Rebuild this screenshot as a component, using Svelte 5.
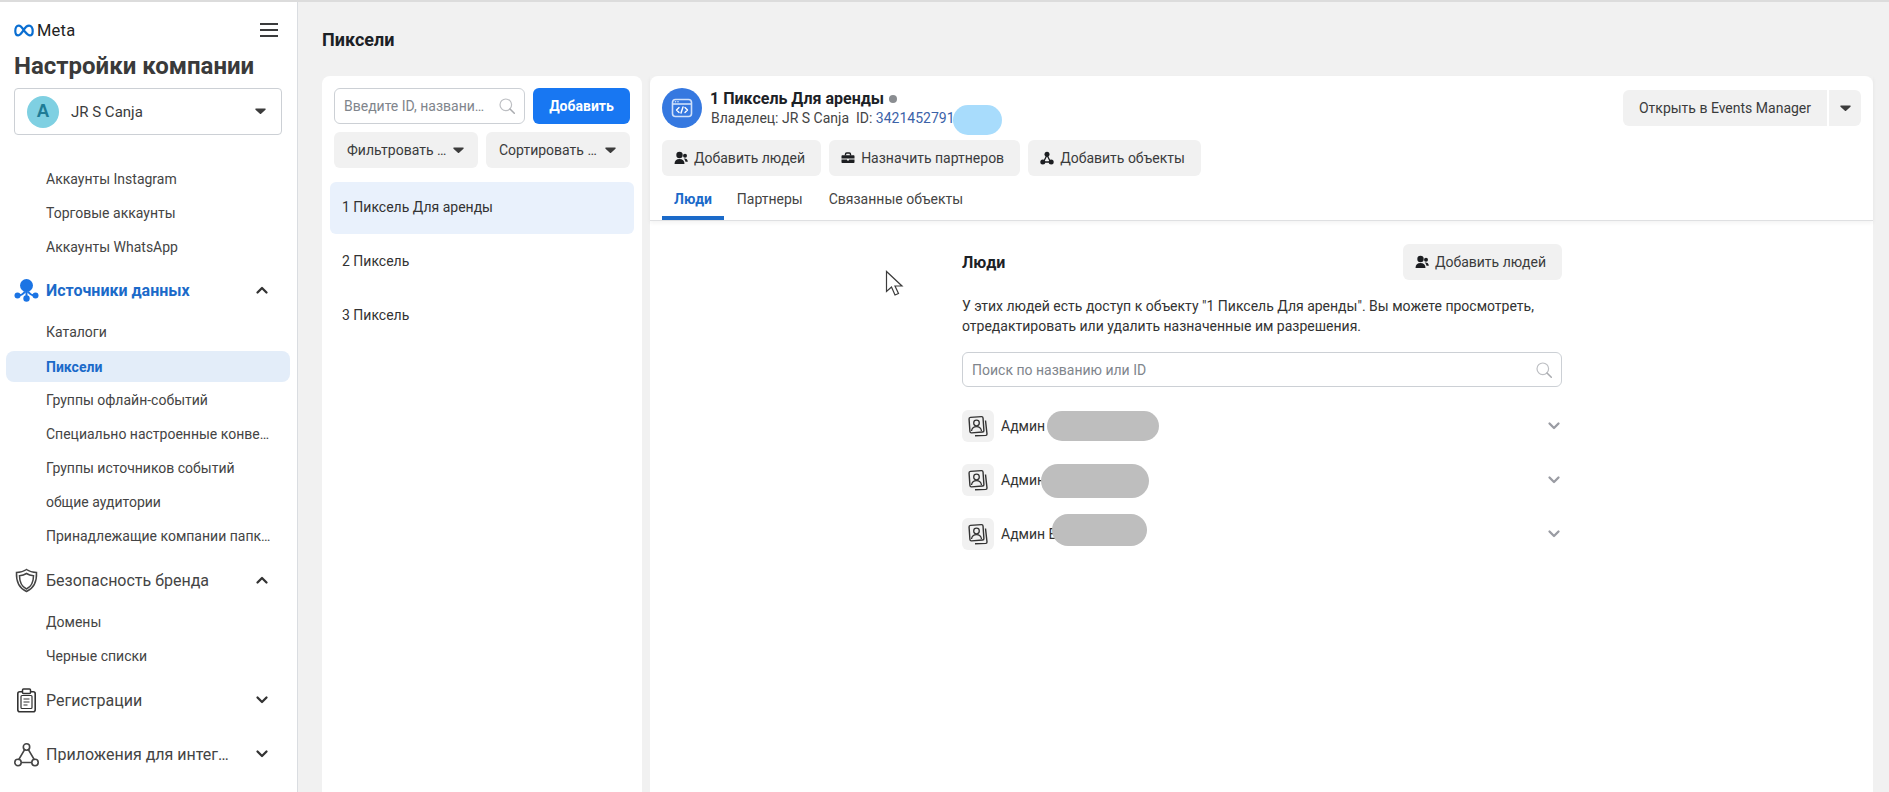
<script>
  const top = ['Аккаунты Instagram', 'Торговые аккаунты', 'Аккаунты WhatsApp'];
  const sources = ['Каталоги', 'Пиксели', 'Группы офлайн-событий', 'Специально настроенные конве…', 'Группы источников событий', 'общие аудитории', 'Принадлежащие компании папк…'];
  const brand = ['Домены', 'Черные списки'];
  const pixels = ['1 Пиксель Для аренды', '2 Пиксель', '3 Пиксель'];
  const people = [
    { name: 'Админ', w: 112, h: 30, x: 85, y: 0 },
    { name: 'Админ', w: 108, h: 34, x: 79, y: 1 },
    { name: 'Админ Е', w: 95, h: 32, x: 90, y: -4 }
  ];
</script>

{#snippet caret()}
  <svg class="caret" width="11" height="7" viewBox="0 0 11 7"><path d="M1 .6h9c.6 0 .9.7.5 1.100L6.100 5.800c-.3.300-.9.300-1.200 0L.5 1.700C.1 1.300.4.600 1 .6z" fill="currentColor"/></svg>
{/snippet}
{#snippet chevron(up, cls = 'chev')}
  <svg class={cls} width="14" height="10" viewBox="0 0 14 10"><path d={up ? 'M2.500 7.500 7 3l4.500 4.500' : 'M2.500 2.500 7 7l4.500-4.500'} fill="none" stroke="currentColor" stroke-width="2.300" stroke-linecap="round" stroke-linejoin="round"/></svg>
{/snippet}
{#snippet search()}
  <svg class="mag" width="16" height="16" viewBox="0 0 16 16"><circle cx="6.800" cy="6.800" r="5.800" fill="none" stroke="#bdbfc3" stroke-width="1.200"/><path d="m11 11 4.300 4.300" stroke="#a9abaf" stroke-width="1.500" stroke-linecap="round"/></svg>
{/snippet}
{#snippet addPeople()}
  <svg class="bi" width="14" height="14" viewBox="0 0 14 14"><circle cx="5.500" cy="4" r="3.200" fill="#1c1e21"/><path d="M.5 13c0-3.400 2-5 5-5s5 1.600 5 5z" fill="#1c1e21"/><circle cx="11" cy="4.800" r="2" fill="#1c1e21"/><path d="M9.800 7.500c2.400-.3 4 1 4 3.200h-2.300c-.2-1.300-.8-2.400-1.700-3.200z" fill="#1c1e21"/></svg>
{/snippet}

<div class="page">
  <aside class="side">
    <div class="brandrow">
      <div class="meta">
        <svg width="20" height="13" viewBox="0 0 20 13"><path d="M10 6.500C8 3.300 6.500 1.600 4.700 1.600 2.600 1.600 1.300 3.800 1.300 7c0 2.600 1.100 4.400 2.900 4.400 1.800 0 3.300-1.900 5.800-6 1.900-3 3.300-3.800 5-3.800 2.200 0 3.700 2.400 3.700 5.600 0 2.500-1.100 4.200-2.900 4.200-1.800 0-3.200-1.900-5.800-4.900z" fill="none" stroke="#0a6ed1" stroke-width="2.200"/></svg>
        <span>Meta</span>
      </div>
      <svg class="burger" width="20" height="16" viewBox="0 0 20 16"><path d="M1 2h18M1 8h18M1 14h18" stroke="#3a3b3c" stroke-width="2"/></svg>
    </div>
    <h1>Настройки компании</h1>
    <div class="account">
      <span class="avatar">A</span>
      <span class="acname">JR S Canja</span>
      {@render caret()}
    </div>

    <ul class="sub first">
      {#each top as t}<li>{t}</li>{/each}
    </ul>

    <div class="group active">
      <svg class="gi" width="25" height="25" viewBox="0 0 25 25"><circle cx="12.500" cy="7.500" r="6.500" fill="#1b74e4"/><path d="M12.500 12v8M4 17.500c3 0 5-1 7-4M21 17.500c-3 0-5-1-7-4" stroke="#1b74e4" stroke-width="2" fill="none"/><circle cx="3.500" cy="17.500" r="3" fill="#1b74e4"/><circle cx="21.500" cy="17.500" r="3" fill="#1b74e4"/><circle cx="12.500" cy="20.500" r="3.200" fill="#1b74e4"/></svg>
      <span class="gl">Источники данных</span>
      {@render chevron(true, 'gchev')}
    </div>
    <ul class="sub">
      {#each sources as s}<li class:on={s === 'Пиксели'}><span>{s}</span></li>{/each}
    </ul>

    <div class="group">
      <svg class="gi" width="25" height="25" viewBox="0 0 25 25"><path d="M12.500 1.500c2.800 2 6 3 10 3 .4 8.500-2.200 15.500-10 19-7.800-3.500-10.400-10.500-10-19 4 0 7.200-1 10-3z" fill="none" stroke="#444" stroke-width="1.500"/><path d="M12.500 5.500c2 1.300 4.200 2 7 2.200 0 5.800-2 10.800-7 13.300-5-2.500-7-7.500-7-13.300 2.800-.2 5-.9 7-2.200z" fill="none" stroke="#444" stroke-width="1.500"/></svg>
      <span class="gl">Безопасность бренда</span>
      {@render chevron(true, 'gchev')}
    </div>
    <ul class="sub">
      {#each brand as s}<li>{s}</li>{/each}
    </ul>

    <div class="group closed">
      <svg class="gi" width="25" height="25" viewBox="0 0 25 25"><rect x="3.800" y="3.800" width="17.400" height="20" rx="2" fill="none" stroke="#333" stroke-width="1.600"/><rect x="8.500" y="1" width="8" height="4.500" rx="1" fill="#fff" stroke="#333" stroke-width="1.500"/><rect x="7" y="7.500" width="11" height="13" rx="1" fill="none" stroke="#333" stroke-width="1.200"/><path d="M9.500 11h6M9.500 14h6M9.500 17h4" stroke="#333" stroke-width="1.200"/></svg>
      <span class="gl">Регистрации</span>
      {@render chevron(false, 'gchev')}
    </div>
    <div class="group closed">
      <svg class="gi" width="25" height="25" viewBox="0 0 25 25"><path d="m11 7-6.500 11M14 7l6.500 11M7 20.500h11" stroke="#444" stroke-width="1.500"/><circle cx="12.500" cy="5" r="3.200" fill="none" stroke="#444" stroke-width="1.600"/><circle cx="4" cy="20.500" r="3.200" fill="none" stroke="#444" stroke-width="1.600"/><circle cx="21" cy="20.500" r="3.200" fill="none" stroke="#444" stroke-width="1.600"/></svg>
      <span class="gl">Приложения для интег…</span>
      {@render chevron(false, 'gchev')}
    </div>
  </aside>

  <main class="main">
    <h2>Пиксели</h2>
    <div class="panels">
      <section class="list">
        <div class="tools">
          <div class="find"><span>Введите ID, названи…</span>{@render search()}</div>
          <button class="primary">Добавить</button>
        </div>
        <div class="tools two">
          <button class="btn sel"><span>Фильтровать …</span>{@render caret()}</button>
          <button class="btn sel"><span>Сортировать …</span>{@render caret()}</button>
        </div>
        <ul class="pixels">
          {#each pixels as p, i}<li class:cur={i === 0}>{p}</li>{/each}
        </ul>
      </section>

      <section class="detail">
        <header class="dh">
          <div class="dtop">
            <div class="who">
              <span class="pxicon">
                <svg width="22" height="22" viewBox="0 0 22 22"><rect x="1.500" y="2.500" width="19" height="17" rx="3" fill="none" stroke="#cfe0fa" stroke-width="1.600"/><path d="M1.500 7h19" stroke="#cfe0fa" stroke-width="1.600"/><circle cx="4.500" cy="4.800" r=".8" fill="#cfe0fa"/><circle cx="7" cy="4.800" r=".8" fill="#cfe0fa"/><path d="M8 10.500 5.500 13 8 15.500M14 10.500l2.500 2.500-2.500 2.500M12 10l-2 6" fill="none" stroke="#fff" stroke-width="1.400" stroke-linecap="round" stroke-linejoin="round"/></svg>
              </span>
              <div class="titles">
                <div class="t1">1 Пиксель Для аренды <i class="dot"></i></div>
                <div class="t2">Владелец: JR S Canja &nbsp;ID: <span class="idn">3421452791<b class="blob"></b></span></div>
              </div>
            </div>
            <div class="opener">
              <button class="btn open">Открыть в Events Manager</button>
              <button class="btn more">{@render caret()}</button>
            </div>
          </div>
          <div class="acts">
            <button class="btn act">{@render addPeople()}Добавить людей</button>
            <button class="btn act">
              <svg class="bi" width="14" height="14" viewBox="0 0 14 14"><path d="M4.500 4.500V3.300c0-.7.5-1.300 1.200-1.300h2.600c.7 0 1.200.6 1.200 1.300v1.200" fill="none" stroke="#1c1e21" stroke-width="1.400"/><path d="M1.500 4.200h11c.6 0 1 .4 1 1v2.300H.5V5.200c0-.6.4-1 1-1zM.5 8.500h5.500v1h2v-1h5.500v2.500c0 .6-.4 1-1 1h-11c-.6 0-1-.4-1-1z" fill="#1c1e21"/></svg>
              Назначить партнеров
            </button>
            <button class="btn act">
              <svg class="bi" width="14" height="14" viewBox="0 0 14 14"><path d="m7 4-3.500 7M7 4l3.500 7M3 11h8" stroke="#1c1e21" stroke-width="1.300"/><circle cx="7" cy="3.300" r="2.500" fill="#1c1e21"/><circle cx="2.800" cy="11" r="2.500" fill="#1c1e21"/><circle cx="11.200" cy="11" r="2.500" fill="#1c1e21"/></svg>
              Добавить объекты
            </button>
          </div>
          <nav class="tabs">
            <span class="tab now">Люди</span>
            <span class="tab">Партнеры</span>
            <span class="tab">Связанные объекты</span>
          </nav>
        </header>

        <div class="body">
          <div class="col">
            <div class="chead">
              <h3>Люди</h3>
              <button class="btn act">{@render addPeople()}Добавить людей</button>
            </div>
            <p>У этих людей есть доступ к объекту "1 Пиксель Для аренды". Вы можете просмотреть, отредактировать или удалить назначенные им разрешения.</p>
            <div class="find wide"><span>Поиск по названию или ID</span>{@render search()}</div>
            {#each people as u}
              <div class="person">
                <span class="pic">
                  <svg width="22" height="22" viewBox="0 0 22 22"><rect x="2.500" y="2" width="14" height="15.500" rx="1.500" fill="none" stroke="#333" stroke-width="1.400" transform="rotate(-4 9 10)"/><path d="M18.500 5.500 20 19c0 .8-.5 1.300-1.200 1.400L8 20.800" fill="none" stroke="#333" stroke-width="1.400"/><circle cx="9.500" cy="8" r="2.800" fill="none" stroke="#333" stroke-width="1.300"/><path d="M4.500 16c.5-3 2.500-4.300 5-4.300s4.500 1.300 5 4.300" fill="none" stroke="#333" stroke-width="1.300"/></svg>
                </span>
                <span class="pname">{u.name}</span>
                <b class="mask" style="left:{u.x}px;top:calc(50% - {u.h / 2}px + {u.y}px);width:{u.w}px;height:{u.h}px"></b>
                {@render chevron(false, 'pchev')}
              </div>
            {/each}
          </div>
        </div>

        <svg class="cursor" width="19" height="27" viewBox="0 0 19 27"><path d="M1.500 1.500v20l5-4.500 3.500 8 3.500-1.500-3.500-7.500h7z" fill="#fff" stroke="#3c3c3c" stroke-width="1.200" stroke-linejoin="miter"/></svg>
      </section>
    </div>
  </main>
</div>

<style>
  :global(body) { margin: 0; }
  :global(html), :global(body) { overflow: hidden; }
  * { box-sizing: border-box; }
  .page {
    display: flex;
    width: 1889px;
    height: 792px;
    overflow: hidden;
    border-top: 2px solid #dcdcdc;
    background: #f1f1f1;
    font-family: Roboto, "Liberation Sans", sans-serif;
    color: #1c2b33;
    font-size: 14px;
  }
  ul { list-style: none; margin: 0; padding: 0; }
  button { font-family: inherit; border: 0; cursor: pointer; }

  .side {
    width: 298px;
    flex: none;
    background: #fff;
    border-right: 1px solid #dadde1;
    color: #3a3b3c;
  }
  .brandrow {
    display: flex;
    justify-content: space-between;
    align-items: center;
    height: 16px;
    margin: 20px 18px 0 14px;
  }
  .meta { display: flex; align-items: center; gap: 3px; font-size: 16.500px; font-weight: 400; color: #222; letter-spacing: .2px; }
  .burger { display: block; }
  h1 { margin: 13px 0 0 14px; font-size: 24px; line-height: 30px; font-weight: 700; color: #3a3a3a; }
  .account {
    display: flex;
    align-items: center;
    width: 268px;
    height: 47px;
    margin: 7px 0 0 14px;
    padding: 0 15px 0 12px;
    border: 1px solid #ccd0d5;
    border-radius: 4px;
  }
  .avatar {
    display: grid;
    place-items: center;
    width: 32px;
    height: 32px;
    border-radius: 50%;
    background: #7fd0e2;
    color: #1f7c96;
    font: 700 18px "Liberation Sans", sans-serif;
  }
  .acname { flex: 1; margin-left: 12px; font-size: 15px; }
  .caret { display: block; flex: none; color: #3c3c3c; }

  .sub li {
    display: flex;
    align-items: center;
    width: 284px;
    height: 32px;
    margin: 0 0 2px 6px;
    padding: 0 12px 0 40px;
    border-radius: 8px;
    font-size: 14px;
    color: #444;
  }
  .sub li span { white-space: nowrap; }
  .sub li.on { height: 31px; margin-top: 3px; background: #e3edf9; color: #1b6ac9; font-weight: 700; }
  .sub.first { margin-top: 28px; }

  .group {
    display: flex;
    align-items: center;
    height: 44px;
    margin: 6px 0 4px;
    padding: 0 0 0 14px;
    font-size: 16px;
    color: #444;
  }
  .sub.first + .group { margin-top: 5px; }
  .group.closed { margin-bottom: 10px; }
  .group.active { color: #1b6ac9; font-weight: 700; }
  .gi { flex: none; margin-right: 7px; }
  .gl { width: 209px; white-space: nowrap; }
  :global(.gchev) { color: #333; display: block; }

  .main { flex: 1; min-width: 0; padding: 0 16px 0 24px; }
  h2 { margin: 0; padding-top: 27px; height: 74px; font-size: 18px; line-height: 22px; font-weight: 700; color: #1c2126; }
  .panels { display: flex; gap: 8px; height: 716px; }

  .list {
    width: 320px;
    flex: none;
    background: #fff;
    border-radius: 8px 8px 0 0;
    padding: 12px 8px 0;
  }
  .tools { display: flex; gap: 8px; margin: 0 4px 8px; }
  .find {
    display: flex;
    align-items: center;
    justify-content: space-between;
    width: 191px;
    height: 36px;
    padding: 0 9px;
    background: #fff;
    border: 1px solid #ccd0d5;
    border-radius: 6px;
    color: #80858c;
    font-size: 14px;
  }
  .find span { white-space: nowrap; flex: 1; }
  .find :global(.mag) { flex: none; }
  .primary {
    flex: 1;
    height: 36px;
    background: #1877f2;
    color: #fff;
    border-radius: 6px;
    font-size: 14px;
    font-weight: 700;
  }
  .btn {
    display: inline-flex;
    align-items: center;
    height: 36px;
    background: #f1f1f1;
    border-radius: 6px;
    color: #3a3b3c;
    font-size: 14px;
  }
  .two .sel { flex: 1; padding: 0 14px 0 13px; justify-content: space-between; width: 144px; }
  .sel span { white-space: nowrap; }

  .pixels { margin-top: 14px; }
  .pixels li {
    display: flex;
    align-items: center;
    height: 52px;
    margin-bottom: 2px;
    padding: 0 12px 2px;
    border-radius: 6px;
    font-size: 14px;
    color: #333;
  }
  .pixels li.cur { background: #e9f1fc; }

  .detail { position: relative; flex: 1; min-width: 0; background: #fff; border-radius: 8px 8px 0 0; }
  .dh { height: 145px; border-bottom: 1px solid #dfe0e2; box-shadow: 0 2px 4px rgba(0,0,0,.05); padding: 12px 0 0 12px; }
  .dtop { display: flex; justify-content: space-between; align-items: flex-start; height: 52px; padding-right: 12px; }
  .who { display: flex; gap: 8px; }
  .pxicon { display: grid; place-items: center; width: 40px; height: 40px; border-radius: 50%; background: #3578e0; }
  .titles { padding-top: 1px; }
  .t1 { font-size: 16px; line-height: 19px; font-weight: 700; color: #1c2126; }
  .dot { display: inline-block; width: 8px; height: 8px; border-radius: 50%; background: #8a8d91; margin-left: 1px; vertical-align: 1px; }
  .t2 { margin: 1px 0 0 1px; font-size: 14px; line-height: 19px; color: #444; }
  .idn { position: relative; color: #3b62a8; }
  .blob { position: absolute; left: 77px; top: -5px; width: 49px; height: 30px; border-radius: 15px; background: #a8dcfc; }
  .opener { display: flex; gap: 2px; margin-top: 2px; }
  .open { width: 204px; justify-content: center; border-radius: 6px 0 0 6px; }
  .more { width: 32px; justify-content: center; border-radius: 0 6px 6px 0; }
  .acts { display: flex; gap: 8px; }
  .act { padding: 0 16px 0 12px; gap: 6px; white-space: nowrap; }
  :global(.bi) { flex: none; }
  .tabs { display: flex; height: 44px; }
  .tab {
    display: flex;
    align-items: center;
    padding: 6px 12px 0;
    border-bottom: 4px solid transparent;
    color: #444;
    font-size: 14px;
  }
  .tab + .tab { padding: 6px 0 0; margin-left: 13px; }
  .tab + .tab + .tab { margin-left: 26px; }
  .tab.now { color: #1b6ac9; font-weight: 700; border-bottom-color: #1b6ac9; }

  .body { display: flex; padding: 23px 0 0 312px; }
  .col { width: 600px; }
  .chead { display: flex; align-items: center; justify-content: space-between; height: 36px; }
  h3 { margin: 0; font-size: 16px; font-weight: 700; color: #1c2126; }
  p { margin: 16px 0 0; font-size: 14px; line-height: 20px; color: #333; }
  .find.wide { width: 100%; margin: 16px 0 23px; height: 35px; }
  .person { position: relative; display: flex; align-items: center; height: 32px; margin-bottom: 22px; }
  .pic { display: grid; place-items: center; width: 32px; height: 32px; border-radius: 6px; background: #f1f1f1; flex: none; }
  .pname { margin-left: 7px; flex: 1; font-size: 14px; color: #333; }
  .mask { position: absolute; border-radius: 17px; background: #bebebe; }
  :global(.pchev) { color: #9a9ca3; margin-right: 1px; }
  .cursor { position: absolute; left: 235px; top: 194px; }
</style>
